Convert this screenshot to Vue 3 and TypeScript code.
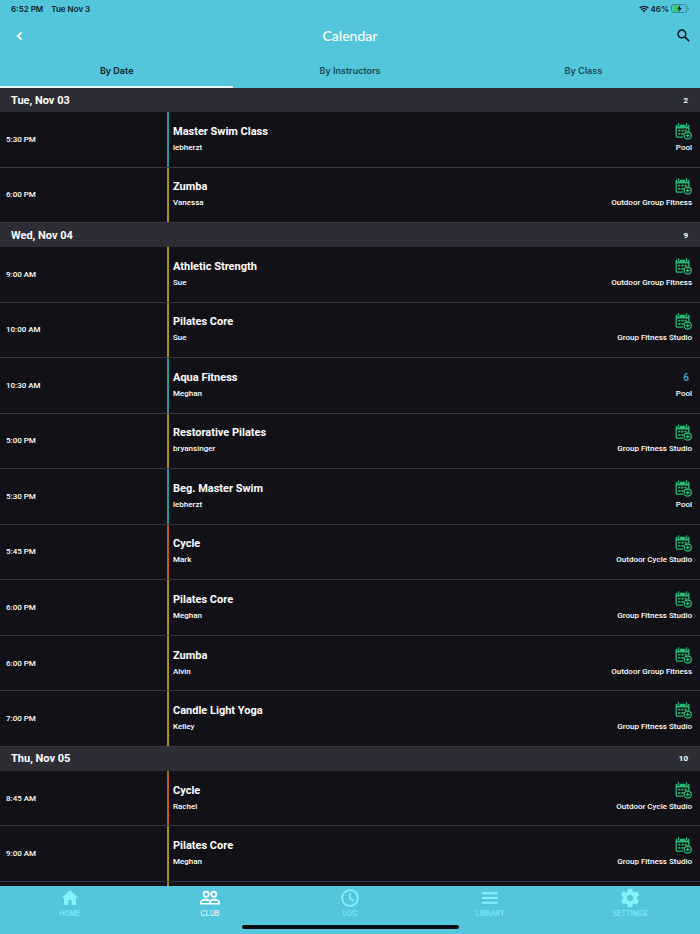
<script setup lang="ts">
import { ref } from 'vue'

type Accent = 'teal' | 'gold' | 'orange'
interface Session {
  time: string
  title: string
  coach: string
  place: string
  accent: Accent
  spots?: number
}
interface Day {
  label: string
  count: number
  sessions: Session[]
}

const session = (time: string, title: string, coach: string, place: string, accent: Accent, spots?: number): Session => ({
  time, title, coach, place, accent, spots,
})

const days: Day[] = [
  {
    label: 'Tue, Nov 03',
    count: 2,
    sessions: [
      session('5:30 PM', 'Master Swim Class', 'lebherzt', 'Pool', 'teal'),
      session('6:00 PM', 'Zumba', 'Vanessa', 'Outdoor Group Fitness', 'gold'),
    ],
  },
  {
    label: 'Wed, Nov 04',
    count: 9,
    sessions: [
      session('9:00 AM', 'Athletic Strength', 'Sue', 'Outdoor Group Fitness', 'gold'),
      session('10:00 AM', 'Pilates Core', 'Sue', 'Group Fitness Studio', 'gold'),
      session('10:30 AM', 'Aqua Fitness', 'Meghan', 'Pool', 'teal', 6),
      session('5:00 PM', 'Restorative Pilates', 'bryansinger', 'Group Fitness Studio', 'gold'),
      session('5:30 PM', 'Beg. Master Swim', 'lebherzt', 'Pool', 'teal'),
      session('5:45 PM', 'Cycle', 'Mark', 'Outdoor Cycle Studio', 'orange'),
      session('6:00 PM', 'Pilates Core', 'Meghan', 'Group Fitness Studio', 'gold'),
      session('6:00 PM', 'Zumba', 'Alvin', 'Outdoor Group Fitness', 'gold'),
      session('7:00 PM', 'Candle Light Yoga', 'Kelley', 'Group Fitness Studio', 'gold'),
    ],
  },
  {
    label: 'Thu, Nov 05',
    count: 10,
    sessions: [
      session('8:45 AM', 'Cycle', 'Rachel', 'Outdoor Cycle Studio', 'orange'),
      session('9:00 AM', 'Pilates Core', 'Meghan', 'Group Fitness Studio', 'gold'),
    ],
  },
]

const tabs = ['By Date', 'By Instructors', 'By Class']
const activeTab = ref('By Date')

const nav = ['HOME', 'CLUB', 'LOG', 'LIBRARY', 'SETTINGS']
const activeNav = ref('CLUB')
</script>

<template>
  <div class="app">
    <header class="top">
      <div class="status">
        <span>6:52 PM</span>
        <span>Tue Nov 3</span>
        <span class="power">
          <svg viewBox="0 0 20 14" width="10" height="8" aria-hidden="true">
            <g fill="none" stroke="#0c1d22" stroke-width="2.6">
              <path d="M1 5.2a13 13 0 0 1 18 0" />
              <path d="M4.4 8.6a8 8 0 0 1 11.2 0" />
            </g>
            <path d="M10 13.6 6.9 10.6a4.400 4.400 0 0 1 6.200 0z" fill="#0c1d22" />
          </svg>
          <span>46%</span>
          <svg viewBox="0 0 18 9" width="18" height="9" aria-hidden="true">
            <rect x=".5" y=".5" width="15.5" height="8" rx="2.5" fill="none" stroke="#3b8593" />
            <path d="M3 1.500h4.500v6H3A1.300 1.300 0 0 1 1.700 6.200V2.800A1.300 1.300 0 0 1 3 1.500z" fill="#34cf62" />
            <path d="M9.300 1 6 5h2l-.6 3L11 4H9z" fill="#06181c" />
            <path d="M17 3v3q1-.5 1-1.500T17 3z" fill="#3b8593" />
          </svg>
        </span>
      </div>
      <div class="bar">
        <button class="icon-btn" type="button" aria-label="Back">
          <svg viewBox="0 0 8 10" width="8" height="10"><path d="M6.500 1.300 2.800 5l3.700 3.700" fill="none" stroke="#fff" stroke-width="1.800" /></svg>
        </button>
        <h1>Calendar</h1>
        <button class="icon-btn" type="button" aria-label="Search">
          <svg viewBox="2.500 2.500 18.500 18.500" width="13" height="13"><path fill="#0a1a1e" stroke="#0a1a1e" stroke-width=".2" d="M15.500 14h-.79l-.28-.27A6.471 6.471 0 0 0 16 9.500 6.500 6.500 0 1 0 9.500 16c1.610 0 3.090-.59 4.230-1.570l.27.28v.79l5 4.990L20.490 19l-4.990-5zm-6 0C7.010 14 5 11.990 5 9.500S7.010 5 9.500 5 14 7.010 14 9.500 11.990 14 9.500 14z" /></svg>
        </button>
      </div>
      <nav class="tabs">
        <button
          v-for="tab in tabs"
          :key="tab"
          type="button"
          class="tab"
          :class="{ active: tab === activeTab }"
          @click="activeTab = tab"
        >{{ tab }}</button>
      </nav>
    </header>

    <main class="list">
      <template v-for="day in days" :key="day.label">
        <h2 class="day"><span>{{ day.label }}</span><span class="count">{{ day.count }}</span></h2>
        <article v-for="(s, i) in day.sessions" :key="i" class="row">
          <time class="time">{{ s.time }}</time>
          <div class="info" :class="s.accent">
            <h3>{{ s.title }}</h3>
            <p>{{ s.coach }}</p>
          </div>
          <div class="side">
            <span v-if="s.spots" class="spots">{{ s.spots }}</span>
            <button v-else class="add" type="button" :aria-label="'Add ' + s.title + ' to calendar'">
              <svg viewBox="0 0 17 17" width="17" height="17">
                <path d="M1.600 1.800h11.800a1 1 0 0 1 1 1V5.500H.6V2.800a1 1 0 0 1 1-1z" fill="#2bb978" />
                <path d="M3.500 0v3.600M11.500 0v3.600" stroke="#121117" stroke-width="2.600" />
                <path d="M3.500 .2v2.900M11.500 .2v2.900" stroke="#2bb978" stroke-width="1.300" />
                <path d="M1.200 5v8q0 1.200 1.200 1.200H8M13.800 5v3.500" fill="none" stroke="#2bb978" stroke-width="1.300" />
                <path d="M3.300 6.700h2.100v1.900H3.300zM6.400 6.700h2.100v1.900H6.400zM9.500 6.700h2.100v1.900H9.500zM3.300 9.900h2.100v1.900H3.300zM6.400 9.900h2.100v1.900H6.400z" fill="#2bb978" />
                <circle cx="12.700" cy="12.600" r="3.600" fill="#121117" stroke="#2bb978" stroke-width="1.300" />
                <path d="M12.700 10.600v4M10.700 12.600h4" stroke="#2bb978" stroke-width="1.200" />
              </svg>
            </button>
            <p>{{ s.place }}</p>
          </div>
        </article>
      </template>
      <div class="row peek"><span></span><div class="info gold"></div></div>
    </main>

    <footer class="bottom">
      <nav class="nav">
        <a
          v-for="item in nav"
          :key="item"
          href="#"
          :class="{ active: item === activeNav }"
          @click.prevent="activeNav = item"
        >
          <svg viewBox="0 0 24 24" width="20" height="20" fill="currentColor" aria-hidden="true">
            <path v-if="item === 'HOME'" d="M10 20.500v-6h4v6h5.200v-8.500H22L12 2.800 2 12h2.800v8.500z" />
            <g v-else-if="item === 'CLUB'" fill="none" stroke="currentColor" stroke-width="2">
              <circle cx="7.400" cy="7.500" r="3.100" />
              <circle cx="16.600" cy="7.500" r="3.100" />
              <path d="M1 18.900v-1.700C1 15 4.500 13.900 6.900 13.900s5.600 1.100 5.600 3.300v1.700zM12.500 18.900H23v-1.700c0-2.200-3.500-3.300-5.900-3.300-1.800 0-3.800.6-4.900 1.700" />
            </g>
            <g v-else-if="item === 'LOG'" fill="none" stroke="currentColor" stroke-width="2.100">
              <circle cx="12" cy="12" r="9.500" />
              <path d="M11.800 6.500v6.200l4.700 2.800" />
            </g>
            <path v-else-if="item === 'LIBRARY'" d="M2.500 5.200h19v2.400h-19zM2.500 10.900h19v2.400h-19zM2.500 16.600h19V19h-19z" />
            <path v-else transform="translate(-1.200 -1.200) scale(1.100)" d="M19.430 12.980c.04-.32.07-.64.07-.98s-.03-.66-.07-.98l2.110-1.650c.19-.15.24-.42.12-.64l-2-3.460c-.12-.22-.39-.3-.61-.22l-2.490 1c-.52-.4-1.080-.73-1.690-.98l-.38-2.650A.488.488 0 0 0 14 2h-4c-.25 0-.46.18-.49.42l-.38 2.650c-.61.25-1.170.59-1.690.98l-2.490-1c-.23-.09-.49 0-.61.22l-2 3.460c-.13.22-.07.49.12.64l2.110 1.650c-.04.32-.07.65-.07.98s.03.66.07.98l-2.110 1.650c-.19.15-.24.42-.12.64l2 3.460c.12.22.39.3.61.22l2.490-1c.52.4 1.080.73 1.690.98l.38 2.650c.03.24.24.42.49.42h4c.25 0 .46-.18.49-.42l.38-2.650c.61-.25 1.170-.59 1.690-.98l2.490 1c.23.09.49 0 .61-.22l2-3.460c.12-.22.07-.49-.12-.64l-2.110-1.650zM12 15.500c-1.930 0-3.500-1.570-3.500-3.500s1.570-3.500 3.500-3.500 3.500 1.570 3.500 3.500-1.570 3.500-3.500 3.500z" />
          </svg>
          <span>{{ item }}</span>
        </a>
      </nav>
      <div class="home-indicator"></div>
    </footer>
  </div>
</template>

<style>
body {
  background: #121117;
}
</style>

<style scoped>
.app {
  display: flex;
  flex-direction: column;
  min-height: 100vh;
  background: #121117;
  color: #fff;
  font-family: Inter, "Liberation Sans", sans-serif;
}
h1, h2, h3, p {
  margin: 0;
}
button {
  padding: 0;
  border: 0;
  background: none;
  font-family: inherit;
  cursor: pointer;
}
svg {
  display: block;
}
.top {
  background: #54c6db;
}
.status {
  display: flex;
  align-items: center;
  gap: 8px;
  height: 17px;
  padding: 0 11px;
  color: #0c1d22;
  font-size: 8px;
  font-weight: 600;
}
.power {
  display: flex;
  align-items: center;
  gap: 2px;
  margin-left: auto;
}
.bar {
  display: flex;
  align-items: center;
  justify-content: space-between;
  height: 37px;
  padding: 0 10px 0 15px;
}
.icon-btn {
  display: flex;
}
h1 {
  font-family: Lato, sans-serif;
  font-size: 14px;
  font-weight: 500;
}
.tabs {
  display: grid;
  grid-template-columns: repeat(3, 1fr);
}
.tab {
  height: 34px;
  border-bottom: 2px solid transparent;
  color: #194a53;
  font-size: 9px;
  font-weight: 600;
}
.tab.active {
  border-bottom-color: #e6f7fa;
  color: #0a1f24;
}
.list {
  display: flex;
  flex: 1;
  flex-direction: column;
  font-family: Roboto, "Liberation Sans", sans-serif;
}
.day {
  display: flex;
  flex: 0 0 24px;
  align-items: center;
  justify-content: space-between;
  padding: 0 12px 0 11px;
  background: #2d2d35;
  font-size: 11px;
  font-weight: 700;
}
.count {
  font-size: 8px;
}
.row {
  display: grid;
  flex: 1 0 55px;
  grid-template-columns: 167px 1fr auto;
  box-sizing: border-box;
  border-bottom: 1px solid #3a393f;
}
.peek {
  flex: 0 0 4px;
  border-bottom: 0;
}
.time {
  align-self: center;
  padding-left: 6px;
  font-size: 8px;
  font-weight: 500;
}
.info {
  display: flex;
  flex-direction: column;
  justify-content: center;
  gap: 3px;
  padding-left: 4px;
  border-left: 2px solid;
}
.info.teal {
  border-color: #309599;
}
.info.gold {
  border-color: #ad9113;
}
.info.orange {
  border-color: #b96018;
}
h3 {
  font-size: 11px;
  font-weight: 700;
  line-height: 14px;
}
.info p,
.side p {
  font-size: 8px;
  font-weight: 500;
  line-height: 12px;
}
.side {
  display: flex;
  flex-direction: column;
  align-items: flex-end;
  justify-content: center;
  gap: 2px;
  padding: 0 8px 2px 0;
}
.spots {
  padding-right: 3px;
  color: #48b3c6;
  font-size: 10px;
  font-weight: 500;
  line-height: 17px;
}
.bottom {
  display: flex;
  flex-direction: column;
  align-items: center;
  box-sizing: border-box;
  height: 48px;
  background: #54c6db;
}
.nav {
  display: grid;
  grid-template-columns: repeat(5, 1fr);
  width: 100%;
}
.nav a {
  display: flex;
  flex-direction: column;
  align-items: center;
  padding-top: 2px;
  color: #83f4fb;
  font-size: 7px;
  line-height: 11px;
  text-decoration: none;
}
.nav a.active {
  color: #fff;
}
.home-indicator {
  width: 31%;
  height: 4px;
  margin-top: 6px;
  border-radius: 2px;
  background: #0b0d10;
}
</style>
